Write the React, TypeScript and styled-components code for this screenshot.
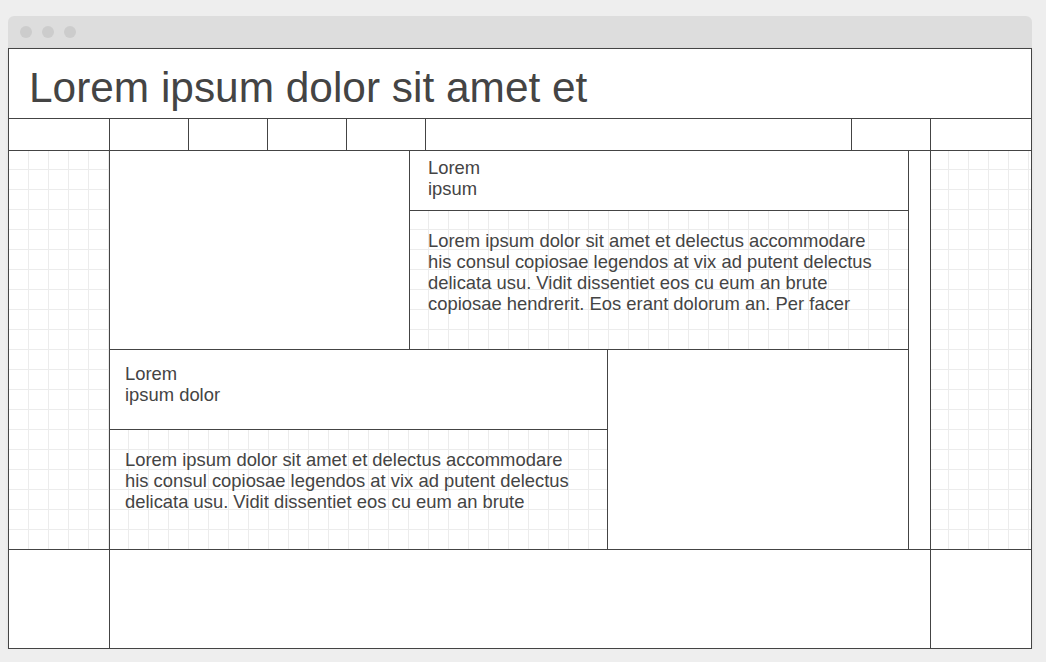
import React from "react";
import styled, { createGlobalStyle } from "styled-components";

const Global = createGlobalStyle`
  html, body { margin: 0; padding: 0; background: #eeeeee; }
  body { font-family: "Liberation Sans", Arial, sans-serif; color: #444; }
`;

const LINE = "#444444";
const GRIDLINE = "#ececec";

const Page = styled.div`
  padding: 16px 14px 0 8px;
  width: 1024px;
`;

const TitleBar = styled.div`
  height: 32px;
  background: #dddddd;
  border-radius: 6px 6px 0 0;
  display: flex;
  align-items: center;
  gap: 10px;
  padding-left: 12px;
  box-sizing: border-box;
`;

const Dot = styled.span`
  width: 12px;
  height: 12px;
  border-radius: 50%;
  background: #cccccc;
`;

const Window = styled.div`
  border: 1px solid ${LINE};
  background: #fff;
  display: flex;
  flex-direction: column;
  box-shadow: 0 1px 3px rgba(0, 0, 0, 0.08);
`;

const TitleRow = styled.header`
  height: 70px;
  box-sizing: border-box;
  border-bottom: 1px solid ${LINE};
  padding: 15px 20px 0;
`;

const Title = styled.h1`
  margin: 0;
  font-weight: 400;
  font-size: 42.4px;
  line-height: 48px;
  color: #444;
`;

const NavRow = styled.nav`
  height: 32px;
  box-sizing: border-box;
  border-bottom: 1px solid ${LINE};
  display: flex;
`;

const NavCell = styled.div<{ $w: number; $last?: boolean }>`
  width: ${(p) => p.$w}px;
  flex: none;
  box-sizing: border-box;
  border-right: ${(p) => (p.$last ? "none" : `1px solid ${LINE}`)};
`;

const BodyRow = styled.main`
  height: 399px;
  box-sizing: border-box;
  border-bottom: 1px solid ${LINE};
  display: flex;
  background-color: #fff;
  background-image: linear-gradient(to right, ${GRIDLINE} 1px, transparent 1px),
    linear-gradient(to bottom, ${GRIDLINE} 1px, transparent 1px);
  background-size: 20px 20px;
  background-position: 19px 18px;
`;

const SideCol = styled.aside<{ $w: number; $border?: boolean }>`
  width: ${(p) => p.$w}px;
  flex: none;
  box-sizing: border-box;
  border-right: ${(p) => (p.$border ? `1px solid ${LINE}` : "none")};
`;

const Middle = styled.section`
  width: 799px;
  flex: none;
  box-sizing: border-box;
  border-right: 1px solid ${LINE};
  display: flex;
  flex-direction: column;
`;

const Strip = styled.div`
  width: 22px;
  flex: none;
  box-sizing: border-box;
  border-right: 1px solid ${LINE};
  background: #fff;
`;

const Band = styled.div<{ $h: number; $border?: boolean }>`
  height: ${(p) => p.$h}px;
  flex: none;
  box-sizing: border-box;
  border-bottom: ${(p) => (p.$border ? `1px solid ${LINE}` : "none")};
  display: flex;
`;

const EmptyBox = styled.div<{ $w: number; $border?: boolean }>`
  width: ${(p) => p.$w}px;
  flex: none;
  box-sizing: border-box;
  background: #fff;
  border-right: ${(p) => (p.$border ? `1px solid ${LINE}` : "none")};
`;

const Card = styled.article<{ $w: number; $border?: boolean }>`
  width: ${(p) => p.$w}px;
  flex: none;
  box-sizing: border-box;
  border-right: ${(p) => (p.$border ? `1px solid ${LINE}` : "none")};
  display: flex;
  flex-direction: column;
`;

const CardHead = styled.h2<{ $h: number; $pt: number; $pl: number }>`
  margin: 0;
  height: ${(p) => p.$h}px;
  flex: none;
  box-sizing: border-box;
  border-bottom: 1px solid ${LINE};
  background: #fff;
  padding: ${(p) => p.$pt}px 0 0 ${(p) => p.$pl}px;
  font-weight: 400;
  font-size: 18.4px;
  line-height: 21px;
  color: #444;
`;

const CardBody = styled.p<{ $pt: number; $pl: number }>`
  margin: 0;
  flex: 1;
  padding: ${(p) => p.$pt}px 0 0 ${(p) => p.$pl}px;
  font-size: 18.4px;
  line-height: 21px;
  color: #444;
`;

const FooterRow = styled.footer`
  height: 98px;
  display: flex;
`;

const FootCell = styled.div<{ $w: number; $border?: boolean }>`
  width: ${(p) => p.$w}px;
  flex: none;
  box-sizing: border-box;
  border-right: ${(p) => (p.$border ? `1px solid ${LINE}` : "none")};
`;

const navWidths = [101, 79, 79, 79, 79, 426, 79, 100];

export default function App() {
  return (
    <>
      <Global />
      <Page>
        <TitleBar>
          <Dot />
          <Dot />
          <Dot />
        </TitleBar>
        <Window>
          <TitleRow>
            <Title>Lorem ipsum dolor sit amet et</Title>
          </TitleRow>
          <NavRow>
            {navWidths.map((w, i) => (
              <NavCell key={i} $w={w} $last={i === navWidths.length - 1} />
            ))}
          </NavRow>
          <BodyRow>
            <SideCol $w={101} $border />
            <Middle>
              <Band $h={199} $border>
                <EmptyBox $w={300} $border />
                <Card $w={498}>
                  <CardHead $h={60} $pt={6} $pl={18}>
                    Lorem
                    <br />
                    ipsum
                  </CardHead>
                  <CardBody $pt={19} $pl={18}>
                    Lorem ipsum dolor sit amet et delectus accommodare
                    <br />
                    his consul copiosae legendos at vix ad putent delectus
                    <br />
                    delicata usu. Vidit dissentiet eos cu eum an brute
                    <br />
                    copiosae hendrerit. Eos erant dolorum an. Per facer
                  </CardBody>
                </Card>
              </Band>
              <Band $h={199}>
                <Card $w={498} $border>
                  <CardHead $h={80} $pt={13} $pl={15}>
                    Lorem
                    <br />
                    ipsum dolor
                  </CardHead>
                  <CardBody $pt={19} $pl={15}>
                    Lorem ipsum dolor sit amet et delectus accommodare
                    <br />
                    his consul copiosae legendos at vix ad putent delectus
                    <br />
                    delicata usu. Vidit dissentiet eos cu eum an brute
                  </CardBody>
                </Card>
                <EmptyBox $w={300} />
              </Band>
            </Middle>
            <Strip />
            <SideCol $w={100} />
          </BodyRow>
          <FooterRow>
            <FootCell $w={101} $border />
            <FootCell $w={821} $border />
            <FootCell $w={100} />
          </FooterRow>
        </Window>
      </Page>
    </>
  );
}
